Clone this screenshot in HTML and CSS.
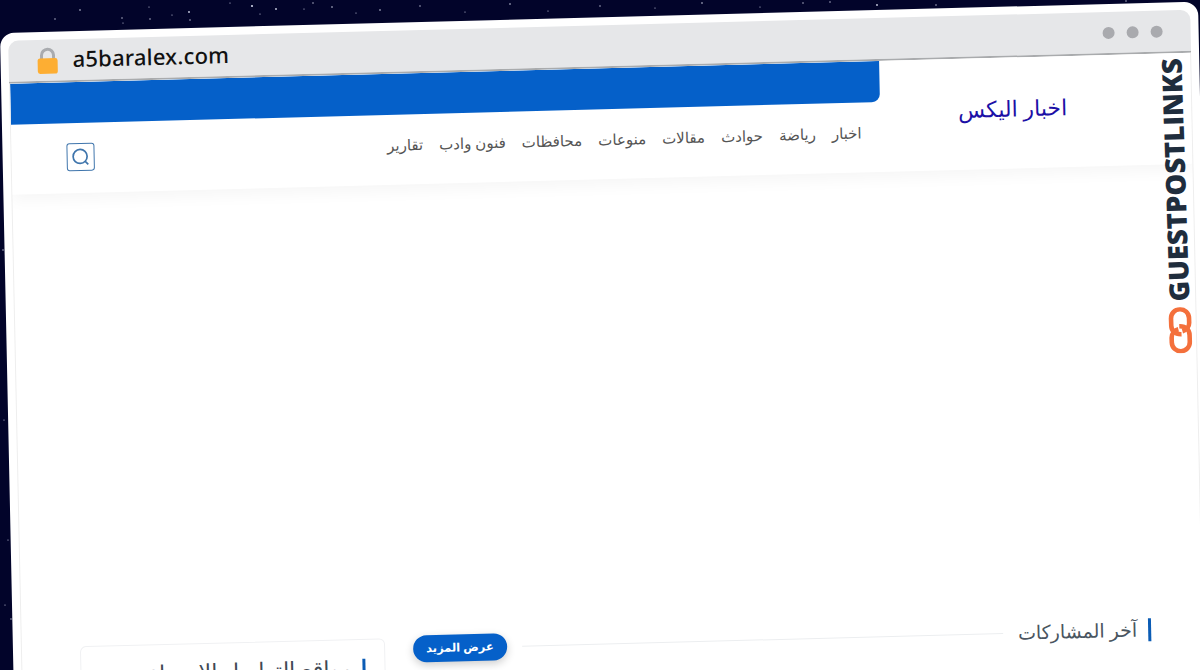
FILE: index.html
```html
<!DOCTYPE html>
<html lang="en">
<head>
  <meta charset="UTF-8">
  <title>a5baralex.com</title>
  <link rel="stylesheet" href="styles.css">
</head>
<body>
  <!-- night sky behind the browser window -->
  <svg class="stars" width="1200" height="670" viewBox="0 0 1200 670">
    <g fill="#cfd3e6">
      <circle cx="55" cy="19" r="0.7"/><circle cx="80" cy="10" r="0.8"/><circle cx="122" cy="18" r="0.7"/>
      <circle cx="123" cy="23" r="0.6"/><circle cx="149" cy="7" r="0.6"/><circle cx="150" cy="19" r="0.7"/>
      <circle cx="172" cy="15" r="0.6"/><circle cx="189" cy="12" r="0.9"/><circle cx="190" cy="20" r="0.7"/>
      <circle cx="230" cy="3" r="0.6"/><circle cx="252" cy="6" r="1.1"/><circle cx="260" cy="14" r="0.6"/>
      <circle cx="276" cy="9" r="0.9"/><circle cx="304" cy="9" r="0.6"/><circle cx="313" cy="3" r="0.7"/>
      <circle cx="332" cy="7" r="0.8"/><circle cx="356" cy="13" r="0.6"/><circle cx="380" cy="10" r="0.8"/>
      <circle cx="420" cy="6" r="0.7"/><circle cx="465" cy="12" r="0.6"/><circle cx="510" cy="4" r="0.8"/>
      <circle cx="548" cy="11" r="0.6"/><circle cx="600" cy="6" r="0.7"/><circle cx="655" cy="8" r="0.6"/>
      <circle cx="702" cy="3" r="0.8"/><circle cx="760" cy="7" r="0.6"/><circle cx="803" cy="3" r="0.7"/>
      <circle cx="830" cy="2" r="0.7"/><circle cx="877" cy="5" r="0.9"/><circle cx="936" cy="5" r="0.7"/>
      <circle cx="1126" cy="1" r="0.7"/><circle cx="11" cy="619" r="0.7"/><circle cx="5" cy="605" r="0.6"/>
      <circle cx="4" cy="420" r="0.6"/><circle cx="3" cy="250" r="0.7"/><circle cx="8" cy="540" r="0.6"/>
    </g>
  </svg>

  <div class="window">
    <div class="address-bar">
      <svg class="lock" width="22" height="28" viewBox="0 0 22 28">
        <path d="M5 14V8.5a6 6 0 0 1 12 0V14" fill="none" stroke="#a9abaf" stroke-width="3"/>
        <rect x="1" y="11.5" width="20" height="15.5" rx="2.5" fill="#fdae33"/>
      </svg>
      <span class="url">a5baralex.com</span>
      <div class="dots">
        <i class="dot"></i><i class="dot"></i><i class="dot"></i>
      </div>
    </div>

    <div class="page" dir="rtl" lang="ar">
      <header class="site-header">
        <div class="brand">
          <a class="brand-name">اخبار اليكس</a>
        </div>
        <div class="header-main">
          <div class="top-strip"></div>
          <div class="nav-row">
            <nav class="nav">
              <a>اخبار</a>
              <a>رياضة</a>
              <a>حوادث</a>
              <a>مقالات</a>
              <a>منوعات</a>
              <a>محافظات</a>
              <a>فنون وادب</a>
              <a>تقارير</a>
            </nav>
            <button class="search-btn">
              <svg width="20" height="20" viewBox="0 0 20 20" fill="none" stroke="#3f75ac" stroke-width="1.7">
                <circle cx="9.5" cy="9.5" r="7"/>
                <path d="M14.5 14.5l3 3"/>
              </svg>
            </button>
          </div>
        </div>
      </header>

      <main class="content">
        <section class="posts">
          <div class="section-head">
            <h2 class="section-title">آخر المشاركات</h2>
            <span class="section-line"></span>
            <a class="more-btn">عرض المزيد</a>
          </div>
        </section>
        <aside class="side-card">
          <h3 class="side-title">مواقع التواصل الاجتماعي</h3>
        </aside>
      </main>
    </div>

    <div class="badge">
      <svg class="badge-icon" width="24" height="46" viewBox="0 0 24 46" fill="none" stroke="#f4703c" stroke-width="4.6">
        <path d="M13 27C6 27 3 23 3 18V11a9 9 0 0 1 18 0V16C21 20 18 23 14 24"/>
        <path d="M11 19C18 19 21 23 21 28V35a9 9 0 0 1-18 0V30C3 26 6 23 10 22"/>
      </svg>
      <span class="badge-text">GUESTPOSTLINKS</span>
    </div>
  </div>
</body>
</html>
```

FILE: styles.css
```css
html, body {
  height: 100%;
}

body {
  margin: 0;
  background: #02042a;
  overflow: hidden;
  font-family: "Noto Sans", "DejaVu Sans", sans-serif;
}

.stars {
  position: absolute;
  left: 0;
  top: 0;
}

/* the whole browser window sits tilted on the canvas */
.window {
  position: absolute;
  left: 0;
  top: 33px;
  width: 1182px;
  height: 760px;
  padding: 8px;
  background: #fff;
  border-radius: 14px;
  transform-origin: 0 0;
  transform: matrix(1, -0.0262, 0.021, 1, 0, 0);
}

.address-bar {
  display: flex;
  align-items: center;
  height: 43px;
  padding: 0 28px 0 28px;
  box-sizing: border-box;
  background: #e6e7e9;
  border-bottom: 2px solid #a9abad;
  border-radius: 10px 10px 0 0;
}

.lock {
  margin-top: 1px;
}

.url {
  margin: -3px 0 0 14px;
  font-size: 22px;
  font-weight: 500;
  letter-spacing: 0.2px;
  color: #111;
}

.dots {
  display: flex;
  gap: 12px;
  margin-left: auto;
}

.dot {
  width: 12px;
  height: 12px;
  border-radius: 50%;
  background: #a9aaae;
}

.page {
  height: 709px;
  border: solid #eee;
  border-width: 0 1px;
  overflow: hidden;
}

.site-header {
  display: flex;
  height: 111px;
  background: #fff;
  box-shadow: 0 6px 16px rgba(0, 0, 0, 0.04);
}

.brand {
  box-sizing: border-box;
  width: 311px;
  padding: 35px 124px 0 0;
}

.brand-name {
  font-size: 22px;
  color: #1c10a6;
}

.header-main {
  flex: 1;
}

.top-strip {
  height: 41px;
  background: #0560c9;
  border-radius: 0 0 8px 0;
}

.nav-row {
  display: flex;
  align-items: center;
  justify-content: space-between;
  padding: 20px 19px 0 55px;
}

.nav {
  display: flex;
  gap: 16px;
  margin-top: -8px;
}

.nav a {
  font-size: 15px;
  color: #555;
}

.search-btn {
  display: flex;
  align-items: center;
  justify-content: center;
  width: 28px;
  height: 28px;
  padding: 0;
  background: #fff;
  border: 1px solid #3f75ac;
  border-radius: 3px;
}

.content {
  display: grid;
  grid-template-columns: 1fr 305px;
  gap: 28px;
  padding: 451px 51px 0 58px;
}

.section-head {
  display: flex;
  align-items: center;
  gap: 15px;
}

.section-title {
  margin: 0;
  padding-right: 11px;
  border-right: 3px solid #0b5cb5;
  font-size: 19px;
  font-weight: 400;
  line-height: 23px;
  color: #4a5560;
}

.section-line {
  flex: 1;
  height: 1px;
  background: #eceef0;
}

.more-btn {
  padding: 5px 13px 7px;
  background: #0560c9;
  border-radius: 14px;
  box-shadow: 0 3px 8px rgba(0, 0, 0, 0.2);
  font-size: 11.5px;
  font-weight: 700;
  color: #fff;
}

.side-card {
  height: 120px;
  margin-top: 2px;
  padding: 19px 19px 0 0;
  background: #fff;
  border: 1px solid #f0f1f3;
  border-radius: 6px;
}

.side-title {
  margin: 0;
  padding: 0 10px 10px 0;
  border-right: 3px solid #0b5cb5;
  font-size: 22px;
  font-weight: 400;
  line-height: 16px;
  color: #3f4954;
}

/* watermark running up the right edge */
.badge {
  position: absolute;
  right: 12px;
  top: 56px;
  display: flex;
  flex-direction: column-reverse;
  align-items: center;
  gap: 6px;
  transform: rotate(-0.7deg);
}

.badge-text {
  writing-mode: vertical-rl;
  transform: rotate(180deg);
  font-family: "Open Sans", sans-serif;
  font-size: 27.5px;
  font-weight: 800;
  line-height: 28px;
  color: #1f2d3d;
}
```
